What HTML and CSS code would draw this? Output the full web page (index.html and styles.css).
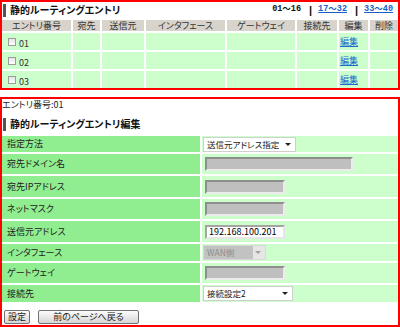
FILE: index.html
```
<!DOCTYPE html>
<html lang="ja">
<head>
<meta charset="utf-8">
<title>静的ルーティングエントリ</title>
<link rel="stylesheet" href="styles.css">
</head>
<body>
<div class="box list-box">
  <div class="list-head">
    <h2 class="sec-title">静的ルーティングエントリ</h2>
    <div class="pager"><span class="cur">01～16</span><span class="sep">|</span><a href="#">17～32</a><span class="sep">|</span><a href="#">33～40</a></div>
  </div>
  <table class="list">
    <thead>
      <tr>
        <th class="c-no">エントリ番号</th>
        <th class="c-dst">宛先</th>
        <th class="c-src">送信元</th>
        <th class="c-if">インタフェース</th>
        <th class="c-gw">ゲートウェイ</th>
        <th class="c-conn">接続先</th>
        <th class="c-edit">編集</th>
        <th class="c-del">削除</th>
      </tr>
    </thead>
    <tbody>
      <tr>
        <td class="no"><label class="entry"><input type="checkbox" class="chk"><span class="num">01</span></label></td>
        <td></td><td></td><td></td><td></td><td></td>
        <td class="edit"><a href="#">編集</a></td><td></td>
      </tr>
      <tr>
        <td class="no"><label class="entry"><input type="checkbox" class="chk"><span class="num">02</span></label></td>
        <td></td><td></td><td></td><td></td><td></td>
        <td class="edit"><a href="#">編集</a></td><td></td>
      </tr>
      <tr>
        <td class="no"><label class="entry"><input type="checkbox" class="chk"><span class="num">03</span></label></td>
        <td></td><td></td><td></td><td></td><td></td>
        <td class="edit"><a href="#">編集</a></td><td></td>
      </tr>
    </tbody>
  </table>
</div>

<div class="box edit-box">
  <p class="entry-no">エントリ番号:01</p>
  <h2 class="sec-title form-title">静的ルーティングエントリ編集</h2>
  <table class="form">
    <tr class="r16">
      <th>指定方法</th>
      <td><span class="sel w93"><select><option>送信元アドレス指定</option></select></span></td>
    </tr>
    <tr class="r20">
      <th>宛先ドメイン名</th>
      <td><input type="text" class="txt w148" disabled></td>
    </tr>
    <tr class="r21">
      <th>宛先IPアドレス</th>
      <td><input type="text" class="txt w80" disabled></td>
    </tr>
    <tr class="r20">
      <th>ネットマスク</th>
      <td><input type="text" class="txt w80" disabled></td>
    </tr>
    <tr class="r21">
      <th>送信元アドレス</th>
      <td><input type="text" class="txt on w80" value="192.168.100.201"></td>
    </tr>
    <tr class="r17">
      <th>インタフェース</th>
      <td><span class="sel dis w63"><select disabled><option>WAN側</option></select></span></td>
    </tr>
    <tr class="r20">
      <th>ゲートウェイ</th>
      <td><input type="text" class="txt w80" disabled></td>
    </tr>
    <tr class="r17">
      <th>接続先</th>
      <td><span class="sel w90"><select><option>接続設定2</option></select></span></td>
    </tr>
  </table>
  <div class="actions">
    <button type="button" class="btn btn-set">設定</button>
    <button type="button" class="btn btn-back">前のページへ戻る</button>
  </div>
</div>
</body>
</html>
```

FILE: styles.css
```
* { box-sizing: border-box; }
html, body { margin: 0; padding: 0; background: #fff; }
body {
  width: 400px;
  font-family: "Noto Sans CJK JP", "Noto Sans", sans-serif;
  font-size: 9px;
  line-height: 12px;
  color: #222;
  font-feature-settings: "palt";
}

.box { border: 2px solid #f00; }
.edit-box { margin-top: 7px; }

.list-head {
  display: flex;
  justify-content: space-between;
  height: 16px;
}
.sec-title {
  margin: 0;
  display: flex;
  align-items: center;
  gap: 4px;
  height: 16px;
  padding-left: 1px;
  font-size: 10px;
  font-weight: bold;
  color: #111;
}
.sec-title::before {
  content: "";
  width: 3px;
  height: 13px;
  background: #555;
}

.pager {
  display: flex;
  align-items: flex-start;
  padding: 3px 5px 0 0;
  font-family: "Liberation Mono", "Noto Sans CJK JP", monospace;
  font-size: 8.5px;
  line-height: 9px;
  font-weight: bold;
  color: #111;
}
.pager a { color: #1a5fc8; text-decoration: underline; }
.pager .sep {
  margin: 0 6px 0 8px;
  font-family: "Liberation Sans", sans-serif;
  font-size: 11px;
  line-height: 10px;
}

.list {
  width: calc(100% + 4px);
  margin: 0 -2px -2px;
  border-spacing: 2px;
  table-layout: fixed;
}
.list th {
  height: 11px;
  padding: 0;
  background: #d8d4cc;
  font-weight: normal;
  color: #333;
  line-height: 11px;
  text-align: center;
  white-space: nowrap;
}
.list td {
  height: 17px;
  padding: 0;
  background: #ccffcc;
}
.c-no { width: 69px; }
.c-dst { width: 27px; }
.c-src { width: 42px; }
.c-if { width: 79px; }
.c-gw { width: 68px; }
.c-conn { width: 40px; }
.c-edit { width: 29px; }

.no { padding-left: 6px !important; }
.entry { display: flex; align-items: center; gap: 3px; }
.chk {
  appearance: none;
  -webkit-appearance: none;
  width: 8px;
  height: 8px;
  margin: 0;
  border: 1px solid #9c9c9c;
  background: linear-gradient(#e4e4e4, #fff);
}
.num { padding-top: 4px; color: #333; }
.edit { padding-left: 1px !important; }
.edit a { color: #1a6ad0; text-decoration: underline; }

.entry-no { margin: 0; height: 12px; color: #222; }
.form-title { margin-top: 6px; height: 14px; padding-left: 1px; }

.form {
  width: calc(100% + 4px);
  margin: 3px -2px 0;
  border-spacing: 2px;
  table-layout: fixed;
}
.form th {
  width: 198px;
  padding: 0 0 0 5px;
  background: #90ee90;
  text-align: left;
  font-weight: normal;
  color: #222;
}
.form td {
  padding: 0 0 0 1px;
  background: #ccffcc;
  vertical-align: middle;
}
.r16 { height: 16px; }
.r17 { height: 17px; }
.r20 { height: 20px; }
.r21 { height: 21px; }

.sel { position: relative; display: inline-block; vertical-align: middle; }
.sel select {
  appearance: none;
  -webkit-appearance: none;
  display: block;
  width: 100%;
  height: 15px;
  margin: 0;
  padding: 0 0 0 3px;
  border: 1px solid #cfcfcf;
  border-radius: 0;
  background: #fff;
  font: inherit;
  font-size: 8.5px;
  line-height: 13px;
  color: #222;
}
.sel::after {
  content: "";
  position: absolute;
  right: 5px;
  top: 6px;
  border-left: 3px solid transparent;
  border-right: 3px solid transparent;
  border-top: 3px solid #222;
  pointer-events: none;
}
.sel.dis select {
  background: linear-gradient(to right, #c2c2c2 0, #c2c2c2 calc(100% - 12px), #e6e6e6 calc(100% - 12px));
  border-color: #d8d8d8;
  color: #8c8c8c;
  opacity: 1;
}
.sel.dis::after { border-top-color: #a0a0a0; }
.w93 { width: 93px; }
.w63 { width: 63px; }
.w90 { width: 90px; }

.txt {
  height: 14px;
  margin: 0 0 0 2px;
  padding: 0 2px;
  border: 2px solid;
  border-color: #8e8e8e #ececec #ececec #8e8e8e;
  background: #bfbfbf;
  font: inherit;
  color: #000;
  vertical-align: middle;
}
.txt.on {
  background: #fff;
  border-color: #a4a4a4 #e6e6e6 #e6e6e6 #a4a4a4;
}
.w148 { width: 148px; }
.w80 { width: 80px; }

.actions {
  display: flex;
  gap: 8px;
  padding: 6px 0 1px 2px;
}
.btn {
  height: 14px;
  margin: 0;
  padding: 0;
  border: 1px solid #707070;
  border-radius: 2px;
  background: linear-gradient(#fcfcfc, #d6d6d6);
  font: inherit;
  line-height: 12px;
  color: #222;
}
.btn-set { width: 26px; }
.btn-back { width: 101px; }
```
